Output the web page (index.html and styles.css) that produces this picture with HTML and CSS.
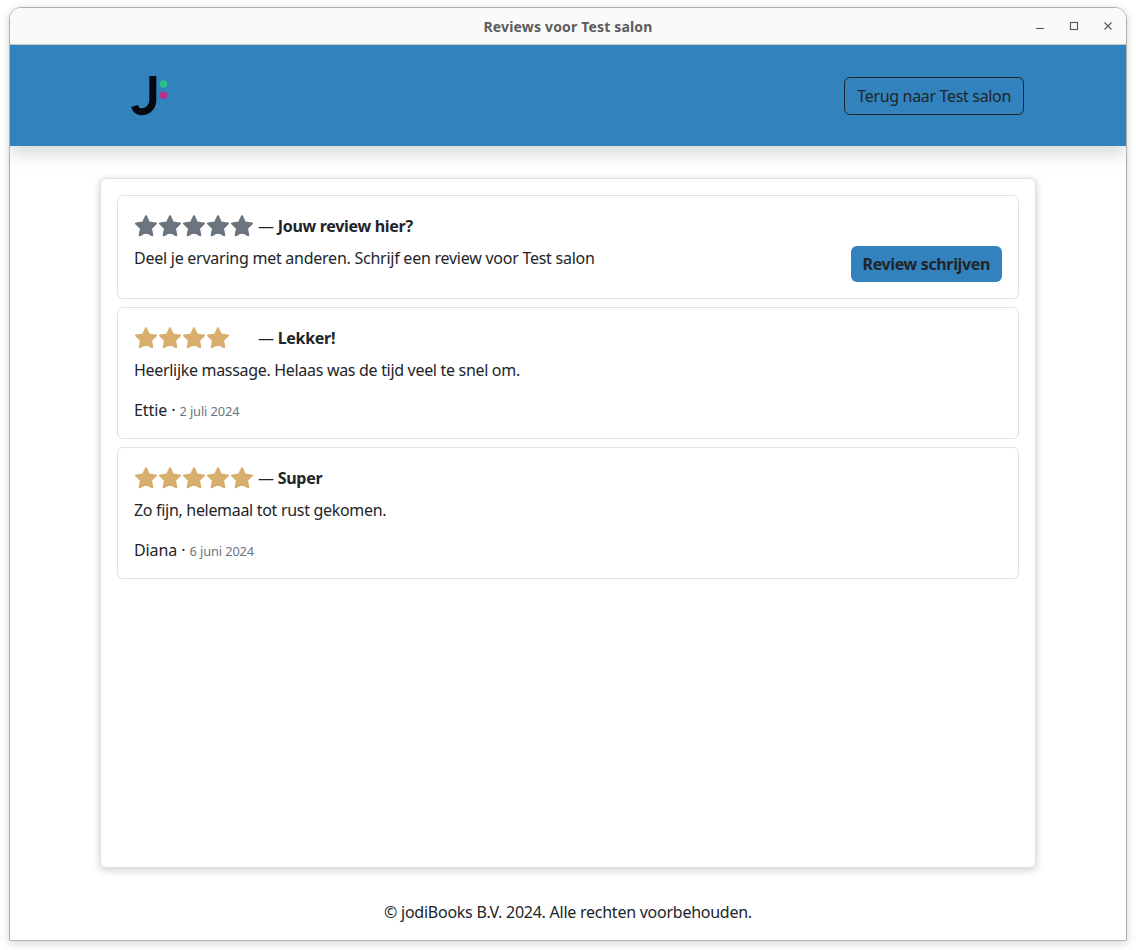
FILE: index.html
```html
<!DOCTYPE html>
<html lang="nl">
<head>
<meta charset="utf-8">
<title>Reviews voor Test salon</title>
<link rel="stylesheet" href="styles.css">
</head>
<body>
<svg class="defs" width="0" height="0" aria-hidden="true">
  <symbol id="star" viewBox="0 0 24 24">
    <polygon points="12,2.2 15,8.6 22,9.5 17,14.3 18.3,21.3 12,17.9 5.7,21.3 7,14.3 2,9.5 9,8.6"/>
  </symbol>
</svg>
<div class="window">
  <div class="titlebar">
    <span class="title">Reviews voor Test salon</span>
    <div class="controls">
      <svg class="ctl" viewBox="0 0 16 16"><path d="M4 10.5h8"/></svg>
      <svg class="ctl" viewBox="0 0 16 16"><rect x="4.5" y="4.5" width="7" height="7"/></svg>
      <svg class="ctl" viewBox="0 0 16 16"><path d="M4.5 4.5l7 7M11.5 4.5l-7 7"/></svg>
    </div>
  </div>
  <header class="topbar">
    <svg class="logo" viewBox="0 0 40 42">
      <path class="logo-j" d="M24.8 1V25.5a11.3 11.3 0 0 1-11.3 11.3c-3.4 0-5.8-2-7-5.8"/>
      <circle class="dot-green" cx="35.5" cy="9" r="3.8"/>
      <circle class="dot-pink" cx="35.5" cy="20.3" r="3.8"/>
    </svg>
    <a class="back-btn">Terug naar Test salon</a>
  </header>
  <main class="content">
    <div class="card">
      <section class="review cta">
        <div class="head">
          <span class="stars grey">
            <svg><use href="#star"/></svg><svg><use href="#star"/></svg><svg><use href="#star"/></svg><svg><use href="#star"/></svg><svg><use href="#star"/></svg>
          </span>
          <span class="dash">—</span> <strong>Jouw review hier?</strong>
        </div>
        <div class="cta-row">
          <p class="cta-text">Deel je ervaring met anderen. Schrijf een review voor Test salon</p>
          <a class="write-btn">Review schrijven</a>
        </div>
      </section>
      <section class="review">
        <div class="head">
          <span class="stars gold">
            <svg><use href="#star"/></svg><svg><use href="#star"/></svg><svg><use href="#star"/></svg><svg><use href="#star"/></svg><svg class="none"><use href="#star"/></svg>
          </span>
          <span class="dash">—</span> <strong>Lekker!</strong>
        </div>
        <p>Heerlijke massage. Helaas was de tijd veel te snel om.</p>
        <div class="meta">Ettie <span class="sep">·</span> <small>2 juli 2024</small></div>
      </section>
      <section class="review">
        <div class="head">
          <span class="stars gold">
            <svg><use href="#star"/></svg><svg><use href="#star"/></svg><svg><use href="#star"/></svg><svg><use href="#star"/></svg><svg><use href="#star"/></svg>
          </span>
          <span class="dash">—</span> <strong>Super</strong>
        </div>
        <p>Zo fijn, helemaal tot rust gekomen.</p>
        <div class="meta">Diana <span class="sep">·</span> <small>6 juni 2024</small></div>
      </section>
    </div>
  </main>
  <footer class="footer">© jodiBooks B.V. 2024. Alle rechten voorbehouden.</footer>
</div>
</body>
</html>
```
FILE: styles.css
```css
* { box-sizing: border-box; }
html, body { height: 100%; }
body {
  margin: 0;
  padding: 7px 9px 9px;
  background: #fff;
  font-family: "Noto Sans", "Open Sans", sans-serif;
  font-size: 16px;
  line-height: 24px;
  letter-spacing: -0.31px;
  color: #212529;
  overflow: hidden;
}
.defs { position: absolute; }
.window {
  height: 934px;
  display: flex;
  flex-direction: column;
  background: #fff;
  border: 1px solid #b0b0b0;
  border-radius: 12px 12px 0 0;
  box-shadow: 0 2px 10px rgba(0,0,0,.18);
  overflow: hidden;
}
.titlebar {
  height: 37px;
  flex: none;
  display: flex;
  align-items: center;
  justify-content: center;
  position: relative;
  background: #fafafa;
  border-bottom: 1px solid #d0d0d0;
}
.title {
  margin-top: 2px;
  font-size: 14px;
  font-weight: 700;
  letter-spacing: 0.17px;
  color: #5e5c5a;
}
.controls {
  position: absolute;
  right: 10px;
  top: 0;
  height: 36px;
  display: flex;
  align-items: center;
  gap: 18px;
}
.ctl { width: 16px; height: 16px; fill: none; stroke: #555; stroke-width: 1.1; }
.topbar {
  height: 101px;
  flex: none;
  display: flex;
  align-items: center;
  justify-content: space-between;
  padding: 0 102px 0 118px;
  background: #3282bd;
  box-shadow: 0 8px 16px rgba(0,0,0,.15);
  position: relative;
}
.logo { width: 40px; height: 42px; margin-top: 1px; }
.logo-j { fill: none; stroke: #06090f; stroke-width: 7; }
.dot-green { fill: #2dbd86; }
.dot-pink { fill: #b92f86; }
.back-btn {
  height: 38px;
  padding: 0 12px;
  display: flex;
  align-items: center;
  border: 1px solid #212529;
  border-radius: 6px;
  letter-spacing: -0.33px;
  color: #212529;
}
.content { flex: none; padding: 32px 90px 0; }
.card {
  height: 690px;
  display: flex;
  flex-direction: column;
  gap: 8px;
  padding: 16px;
  background: #fff;
  border: 1px solid #dfdfdf;
  border-radius: 6px;
  box-shadow: 0 2px 8px rgba(0,0,0,.2);
}
.review {
  height: 132px;
  flex: none;
  padding: 16px;
  border: 1px solid #dee2e6;
  border-radius: 6px;
}
.review.cta { height: 104px; }
.head { height: 28px; display: flex; align-items: center; white-space: pre; }
.head strong { font-weight: 700; margin-left: 4px; letter-spacing: -0.3px; }
.stars { display: flex; margin-right: 4px; }
.stars svg { width: 24px; height: 24px; fill: currentColor; stroke: currentColor; stroke-width: 2; stroke-linejoin: round; }
.grey { color: #6c757d; }
.gold { color: #d8ae6d; }
.gold svg.none { visibility: hidden; }
p { margin: 6px 0 0; }
.cta-text { letter-spacing: -0.25px; }
.cta-row { display: flex; justify-content: space-between; align-items: flex-start; }
.write-btn {
  height: 36px;
  margin-top: 6px;
  padding: 0 12px;
  display: flex;
  align-items: center;
  background: #3282bd;
  border-radius: 6px;
  font-weight: 700;
  letter-spacing: -0.36px;
  color: #212529;
}
.meta { margin-top: 16px; letter-spacing: -0.1px; }
.meta small { font-size: 12.8px; letter-spacing: -0.1px; color: #6c757d; }
.footer { flex: none; text-align: center; padding-top: 32px; letter-spacing: -0.25px; }
```
